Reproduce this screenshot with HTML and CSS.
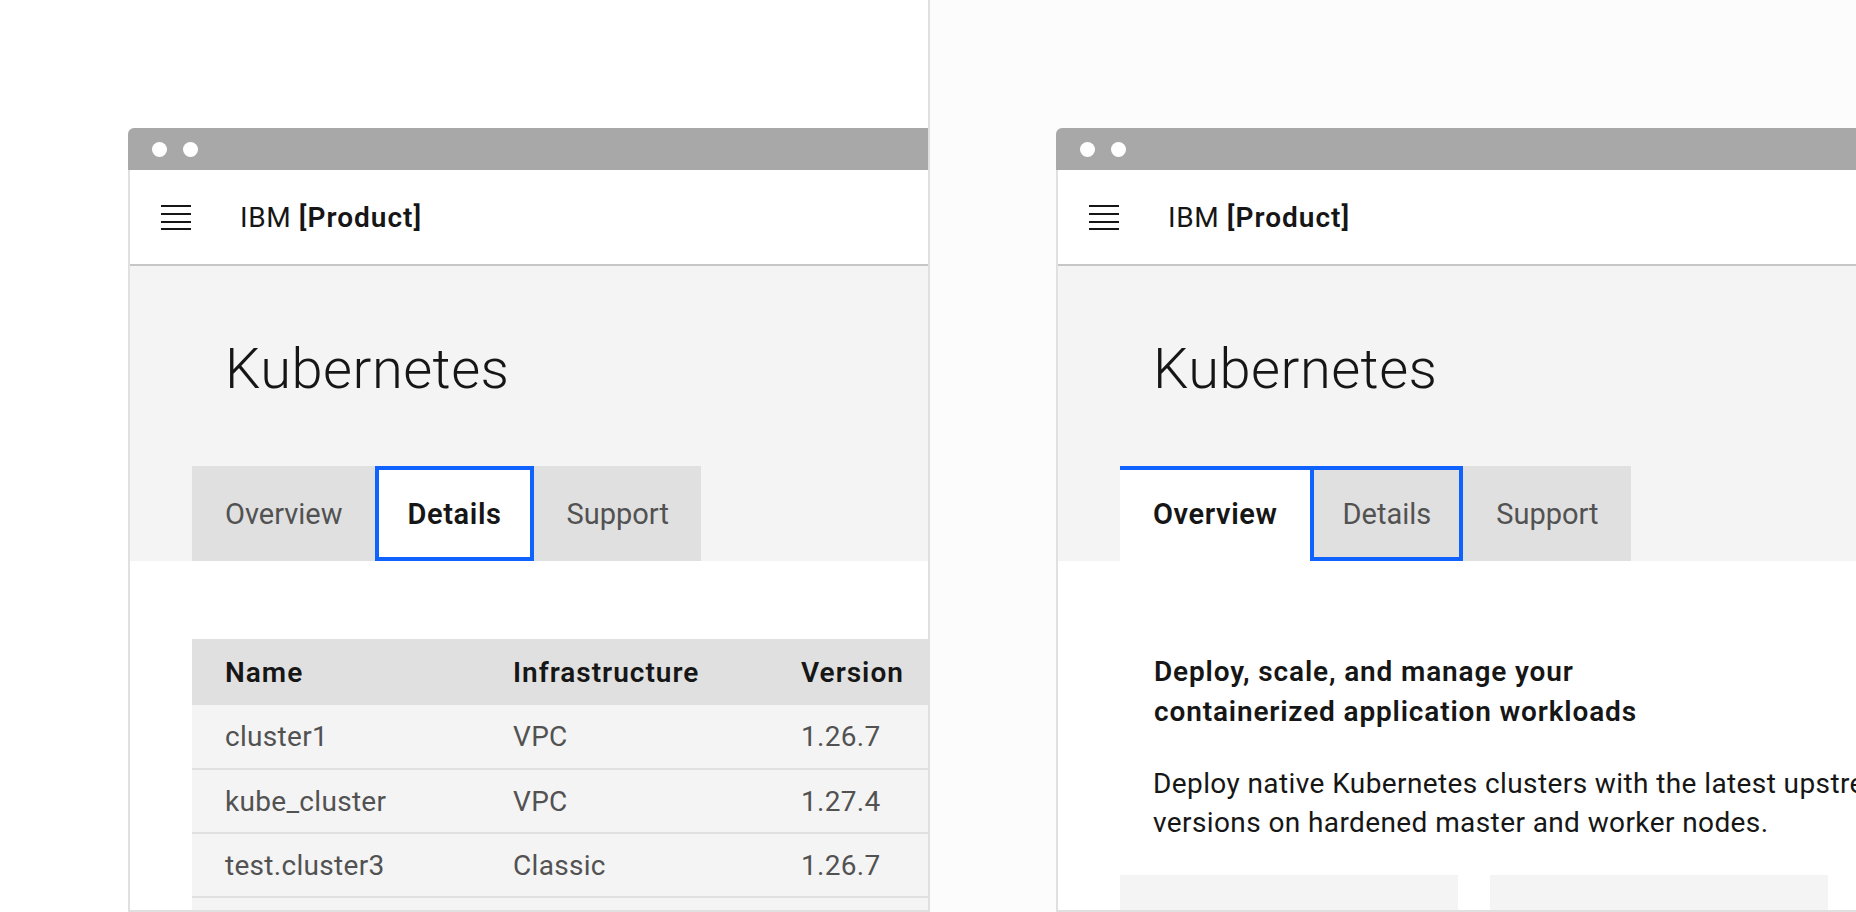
FILE: index.html
```html
<!DOCTYPE html>
<html lang="en">
<head>
<meta charset="utf-8">
<title>Tabs focus example</title>
<link rel="stylesheet" href="styles.css">
</head>
<body>
<div class="stage">
  <section class="panel panel--left">
    <div class="window">
      <div class="titlebar"><span class="dot"></span><span class="dot"></span></div>
      <div class="frame">
        <header class="shell">
          <svg class="menu-icon" width="30" height="26" viewBox="0 0 30 26" aria-hidden="true">
            <rect x="0" y="0" width="30" height="2" fill="#161616"/>
            <rect x="0" y="8" width="30" height="2" fill="#161616"/>
            <rect x="0" y="16" width="30" height="2" fill="#161616"/>
            <rect x="0" y="23" width="30" height="2" fill="#161616"/>
          </svg>
          <span class="brand">IBM <strong>[Product]</strong></span>
        </header>
        <div class="hero">
          <h1 class="title">Kubernetes</h1>
          <div class="tabs">
            <div class="tab">Overview</div>
            <div class="tab tab--selected tab--focus">Details</div>
            <div class="tab">Support</div>
          </div>
        </div>
        <div class="content content--table">
          <table class="data">
            <thead>
              <tr><th>Name</th><th>Infrastructure</th><th>Version</th></tr>
            </thead>
            <tbody>
              <tr><td>cluster1</td><td>VPC</td><td>1.26.7</td></tr>
              <tr><td>kube_cluster</td><td>VPC</td><td>1.27.4</td></tr>
              <tr><td>test.cluster3</td><td>Classic</td><td>1.26.7</td></tr>
              <tr><td>&nbsp;</td><td></td><td></td></tr>
            </tbody>
          </table>
        </div>
      </div>
    </div>
  </section>

  <section class="panel panel--right">
    <div class="window">
      <div class="titlebar"><span class="dot"></span><span class="dot"></span></div>
      <div class="frame">
        <header class="shell">
          <svg class="menu-icon" width="30" height="26" viewBox="0 0 30 26" aria-hidden="true">
            <rect x="0" y="0" width="30" height="2" fill="#161616"/>
            <rect x="0" y="8" width="30" height="2" fill="#161616"/>
            <rect x="0" y="16" width="30" height="2" fill="#161616"/>
            <rect x="0" y="23" width="30" height="2" fill="#161616"/>
          </svg>
          <span class="brand">IBM <strong>[Product]</strong></span>
        </header>
        <div class="hero">
          <h1 class="title">Kubernetes</h1>
          <div class="tabs">
            <div class="tab tab--selected tab--topbar">Overview</div>
            <div class="tab tab--focus">Details</div>
            <div class="tab">Support</div>
          </div>
        </div>
        <div class="content content--overview">
          <h2 class="lead">Deploy, scale, and manage your containerized application workloads</h2>
          <p class="body-copy">Deploy native Kubernetes clusters with the latest upstream<br>versions on hardened master and worker nodes.</p>
          <div class="cards">
            <div class="card"></div>
            <div class="card"></div>
          </div>
        </div>
      </div>
    </div>
  </section>
</div>
</body>
</html>
```

FILE: styles.css
```css
* { box-sizing: border-box; }

html, body {
  margin: 0;
  padding: 0;
  background: #ffffff;
}

body {
  font-family: Roboto, "Liberation Sans", Arial, sans-serif;
  color: #161616;
}

.stage {
  display: flex;
  width: 1856px;
  height: 912px;
  overflow: hidden;
}

.panel {
  height: 912px;
  overflow: hidden;
  padding-top: 128px;
  display: flex;
}

.panel--left {
  width: 930px;
  padding-left: 128px;
  border-right: 2px solid #e0e0e0;
  background: #ffffff;
}

.panel--right {
  width: 926px;
  padding-left: 126px;
  background: #fcfcfc;
}

.window {
  flex: 0 0 960px;
  width: 960px;
  height: 784px;
  display: flex;
  flex-direction: column;
}

.titlebar {
  height: 42px;
  flex: 0 0 42px;
  background: #a8a8a8;
  border-radius: 6px 6px 0 0;
  display: flex;
  align-items: center;
  gap: 16px;
  padding-left: 24px;
}

.dot {
  width: 15px;
  height: 15px;
  border-radius: 50%;
  background: #ffffff;
}

.frame {
  flex: 1 1 auto;
  border: 2px solid #e0e0e0;
  border-top: 0;
  background: #ffffff;
  overflow: hidden;
  display: flex;
  flex-direction: column;
}

.shell {
  height: 96px;
  flex: 0 0 96px;
  border-bottom: 2px solid #c6c6c6;
  display: flex;
  align-items: center;
  padding-left: 31px;
  padding-top: 1px;
}

.menu-icon {
  display: block;
  flex: 0 0 auto;
  margin-right: 49px;
}

.brand {
  font-size: 28px;
  line-height: 36px;
  font-weight: 400;
  letter-spacing: 0.6px;
  color: #161616;
}

.brand strong {
  font-weight: 600;
  letter-spacing: 1px;
}

.hero {
  background: #f4f4f4;
  padding-top: 71px;
  padding-left: 62px;
}

.title {
  margin: 0 0 65px 33px;
  font-size: 56px;
  line-height: 64px;
  font-weight: 300;
  letter-spacing: 0.5px;
  color: #161616;
}

.tabs {
  display: flex;
  height: 95px;
}

.tab {
  display: flex;
  align-items: center;
  padding: 0 32px 0 33px;
  background: #e0e0e0;
  font-size: 29px;
  letter-spacing: 0;
  color: #525252;
  white-space: nowrap;
}

.tab--selected {
  background: #ffffff;
  color: #161616;
  font-weight: 600;
  letter-spacing: 0.6px;
}

.tab--focus {
  box-shadow: inset 0 0 0 4px #0f62fe;
}

.tab--topbar {
  box-shadow: inset 0 4px 0 #0f62fe;
}

.content--table {
  padding: 78px 0 0 62px;
}

.data {
  border-collapse: collapse;
  width: 864px;
  font-size: 28px;
}

.data th,
.data td {
  width: 288px;
  text-align: left;
  padding: 0 0 0 33px;
  white-space: nowrap;
}

.data th {
  height: 66px;
  background: #e0e0e0;
  color: #161616;
  font-weight: 600;
  letter-spacing: 1px;
}

.data td {
  height: 64px;
  background: #f4f4f4;
  color: #525252;
  font-weight: 400;
  letter-spacing: 0.3px;
  border-bottom: 2px solid #e0e0e0;
}

.content--overview {
  padding: 91px 0 0 62px;
}

.lead {
  margin: 0 0 32px 34px;
  max-width: 560px;
  font-size: 28px;
  line-height: 40px;
  font-weight: 600;
  letter-spacing: 0.85px;
  color: #161616;
}

.body-copy {
  margin: 0 0 33px 33px;
  font-size: 28px;
  line-height: 39px;
  font-weight: 400;
  letter-spacing: 0.4px;
  color: #161616;
  white-space: nowrap;
}

.cards {
  display: flex;
  gap: 32px;
}

.card {
  width: 338px;
  height: 120px;
  background: #f4f4f4;
}
```
